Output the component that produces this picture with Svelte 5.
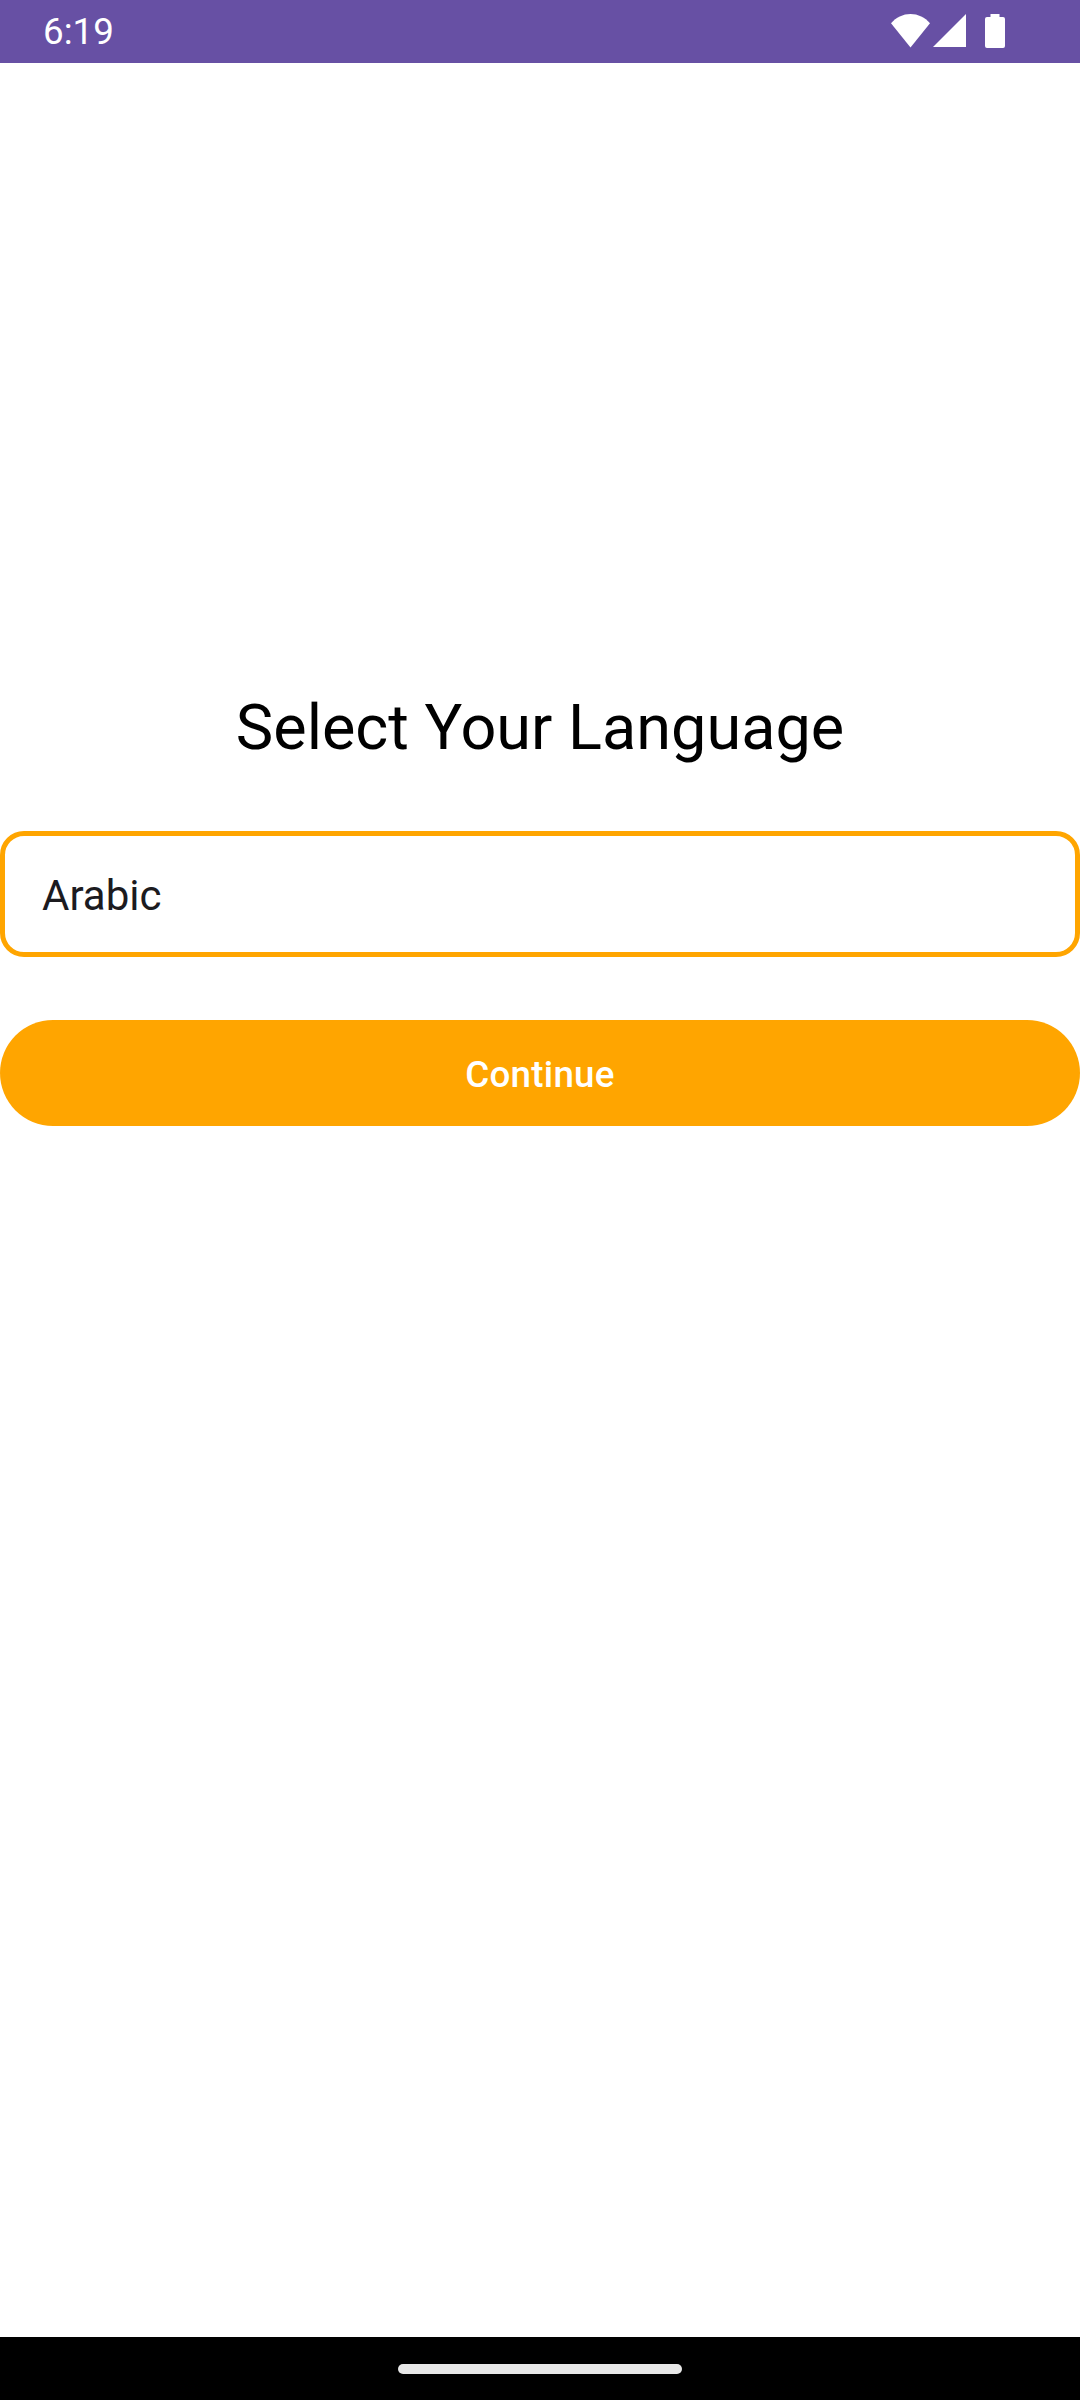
<script>
	let language = 'Arabic';
</script>

<div class="screen">
	<header class="status">
		<span class="time">6:19</span>
		<div class="icons">
			<svg class="wifi" width="39" height="34" viewBox="0 0 39 34">
				<path d="M0 9.200 C5 3.400 12 0 19.500 0 C27 0 34 3.400 39 9.200 L19.500 33.500 Z" fill="#fff" />
			</svg>
			<svg class="signal" width="33" height="34" viewBox="0 0 33 34">
				<path d="M0 33 L33 0 V33 Z" fill="#fff" />
			</svg>
			<svg class="battery" width="20" height="34" viewBox="0 0 20 34">
				<path d="M5.500 0 H14.500 V3 H18 A2 2 0 0 1 20 5 V32 A2 2 0 0 1 18 34 H2 A2 2 0 0 1 0 32 V5 A2 2 0 0 1 2 3 H5.500 Z" fill="#fff" />
			</svg>
		</div>
	</header>

	<main class="content">
		<h1>Select Your Language</h1>
		<div class="field">{language}</div>
		<button class="continue">Continue</button>
	</main>

	<footer class="nav">
		<div class="handle"></div>
	</footer>
</div>

<style>
	:global(body) {
		margin: 0;
		background: #fff;
	}

	.screen {
		width: 1080px;
		height: 2400px;
		display: flex;
		flex-direction: column;
		font-family: Roboto, sans-serif;
		background: #fff;
	}

	.status {
		height: 63px;
		background: #6750a4;
		display: flex;
		align-items: center;
		justify-content: space-between;
		padding: 0 75px 0 43px;
		color: #fff;
	}

	.time {
		font-size: 36.75px;
		line-height: 63px;
	}

	.icons {
		display: flex;
		align-items: flex-start;
		height: 63px;
		padding-top: 14px;
		box-sizing: border-box;
	}

	.wifi {
		margin-right: 3px;
	}

	.signal {
		margin-right: 19px;
	}

	.content {
		flex: 1;
		display: flex;
		flex-direction: column;
		align-items: stretch;
		padding-top: 625px;
	}

	h1 {
		margin: 0 0 63px;
		font-size: 63px;
		line-height: 80px;
		font-weight: 400;
		text-align: center;
		color: #000;
	}

	.field {
		height: 126px;
		box-sizing: border-box;
		border: 5px solid #ffa500;
		border-radius: 24px;
		padding: 2px 37px 0;
		display: flex;
		align-items: center;
		font-size: 42px;
		color: #1c1b1f;
	}

	.continue {
		margin-top: 63px;
		height: 106px;
		border: none;
		border-radius: 53px;
		padding: 2px 0 0;
		background: #ffa500;
		color: #fff;
		font-family: inherit;
		font-size: 36.75px;
		font-weight: 500;
		letter-spacing: 0.26px;
	}

	.nav {
		height: 63px;
		background: #000;
		display: flex;
		justify-content: center;
		padding-top: 27px;
		box-sizing: border-box;
	}

	.handle {
		width: 284px;
		height: 10px;
		border-radius: 5px;
		background: #e8e8e8;
	}
</style>
